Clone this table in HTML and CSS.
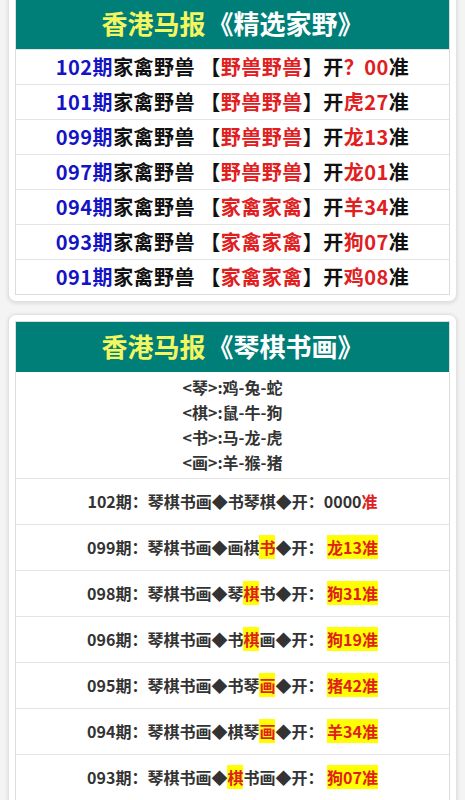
FILE: index.html
```html
<!DOCTYPE html>
<html lang="zh-CN">
<head>
    <meta charset="UTF-8">
    <meta name="viewport" content="width=device-width, initial-scale=1.0">
    <title>香港马报</title>
    <link rel="stylesheet" href="styles.css">
</head>
<body>
    <div class="card card-first">
        <div class="box">
            <div class="title"><span class="title-name">香港马报</span>《精选家野》</div>
            <div class="row-a"><span class="issue">102期</span>家禽野兽 【<span class="hot">野兽野兽</span>】开<span class="hot">？00</span>准</div>
            <div class="row-a"><span class="issue">101期</span>家禽野兽 【<span class="hot">野兽野兽</span>】开<span class="hot">虎27</span>准</div>
            <div class="row-a"><span class="issue">099期</span>家禽野兽 【<span class="hot">野兽野兽</span>】开<span class="hot">龙13</span>准</div>
            <div class="row-a"><span class="issue">097期</span>家禽野兽 【<span class="hot">野兽野兽</span>】开<span class="hot">龙01</span>准</div>
            <div class="row-a"><span class="issue">094期</span>家禽野兽 【<span class="hot">家禽家禽</span>】开<span class="hot">羊34</span>准</div>
            <div class="row-a"><span class="issue">093期</span>家禽野兽 【<span class="hot">家禽家禽</span>】开<span class="hot">狗07</span>准</div>
            <div class="row-a"><span class="issue">091期</span>家禽野兽 【<span class="hot">家禽家禽</span>】开<span class="hot">鸡08</span>准</div>
        </div>
    </div>

    <div class="card">
        <div class="box">
            <div class="title"><span class="title-name">香港马报</span>《琴棋书画》</div>
            <div class="legend">
                <div>&lt;琴&gt;:鸡-兔-蛇</div>
                <div>&lt;棋&gt;:鼠-牛-狗</div>
                <div>&lt;书&gt;:马-龙-虎</div>
                <div>&lt;画&gt;:羊-猴-猪</div>
            </div>
            <div class="row-b">102期：琴棋书画◆书琴棋◆开：0000<span class="red">准</span></div>
            <div class="row-b">099期：琴棋书画◆画棋<span class="mark">书</span>◆开： <span class="mark">龙13准</span></div>
            <div class="row-b">098期：琴棋书画◆琴<span class="mark">棋</span>书◆开： <span class="mark">狗31准</span></div>
            <div class="row-b">096期：琴棋书画◆书<span class="mark">棋</span>画◆开： <span class="mark">狗19准</span></div>
            <div class="row-b">095期：琴棋书画◆书琴<span class="mark">画</span>◆开： <span class="mark">猪42准</span></div>
            <div class="row-b">094期：琴棋书画◆棋琴<span class="mark">画</span>◆开： <span class="mark">羊34准</span></div>
            <div class="row-b">093期：琴棋书画◆<span class="mark">棋</span>书画◆开： <span class="mark">狗07准</span></div>
        </div>
    </div>
</body>
</html>
```

FILE: styles.css
```css
* {
    margin: 0;
    padding: 0;
    box-sizing: border-box;
}

body {
    font-family: "Noto Sans CJK SC", "Noto Sans", sans-serif;
    background-color: #f4f4f4;
    color: #222;
    overflow: hidden;
}

.card {
    margin: 0 8px 12px;
    background-color: #fff;
    border: 1px solid #e2e2e2;
    border-radius: 8px;
    padding: 6px;
    box-shadow: 0 1px 4px rgba(0,0,0,0.12);
}

.card-first {
    margin-top: -9px;
}

.box {
    border: 1px solid #dcdcdc;
}

.title {
    height: 50px;
    line-height: 48px;
    background-color: #007f79;
    color: #fff;
    text-align: center;
    font-size: 26px;
    font-weight: 700;
    white-space: nowrap;
}

.title-name {
    color: #f3f65e;
    margin-right: 2px;
}

.row-a {
    height: 35px;
    line-height: 34px;
    border-top: 1px solid #e4e4e4;
    text-align: center;
    font-size: 20px;
    font-weight: 700;
    letter-spacing: 0.5px;
    color: #111;
    white-space: nowrap;
}

.row-a:first-of-type {
    border-top: none;
}

.issue {
    color: #1414c4;
}

.hot {
    color: #e0201e;
}

.legend {
    padding: 3px 0 3px;
    text-align: center;
    font-size: 16px;
    font-weight: 700;
    line-height: 25px;
    color: #333;
}

.row-b {
    height: 46px;
    line-height: 44px;
    border-top: 1px solid #e4e4e4;
    text-align: center;
    font-size: 16px;
    font-weight: 700;
    color: #333;
    white-space: nowrap;
}

.red {
    color: #e0201e;
}

.mark {
    background-color: #ffff00;
    color: #e0201e;
}
```
